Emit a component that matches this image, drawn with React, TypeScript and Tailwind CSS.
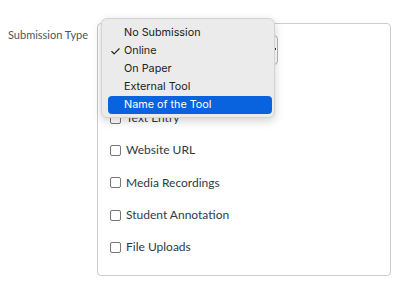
import { Check } from 'lucide-react'

const menuItems = ['No Submission', 'Online', 'On Paper', 'External Tool', 'Name of the Tool']
const options = ['Text Entry', 'Website URL', 'Media Recordings', 'Student Annotation', 'File Uploads']

export default function App() {
  return (
    <div className="relative w-[399px] h-[284px] bg-white font-['Lato','Open_Sans',sans-serif] overflow-hidden">
      <div className="flex pt-[23px] pl-[8px]">
        {/* Field label */}
        <div className="w-[89px] pt-[5px] text-[11px] leading-[14px] text-[#4a555e]">Submission Type</div>

        {/* Fieldset */}
        <div className="w-[294px] h-[253px] border border-[#c7cdd1] rounded-[4px] pl-[9px] pt-[11px]">
          <div className="relative w-[171px] h-[30px] border border-[#b5b5b5] rounded-[4px] bg-white">
            <span className="absolute right-[1px] top-[12px] w-[2px] h-[2px] bg-[#333]" />
          </div>

          <div className="mt-[37px] flex flex-col">
            {options.map((o) => (
              <div key={o} className="h-[32.3px] flex items-center gap-[5px] pl-[3px]">
                <span className="w-[11px] h-[11px] border border-[#767676] rounded-[2px] bg-white" />
                <span className="text-[12px] text-[#2d3b45]">{o}</span>
              </div>
            ))}
          </div>
        </div>
      </div>

      {/* Open select menu */}
      <div className="absolute left-[101px] top-[18px] w-[174px] pt-[5px] pb-[3px] pl-[6px] pr-[2px] bg-[#ebebeb] border border-[#d3d3d3] rounded-[6px] shadow-[0_3px_10px_rgba(0,0,0,0.18)] font-['Inter',sans-serif]">
        {menuItems.map((m, i) => {
          const active = i === 4
          return (
            <div
              key={m}
              className={`h-[18px] flex items-center rounded-[4px] pl-[3px] text-[10.8px] ${active ? 'bg-[#0a63de] text-white' : 'text-[#222]'}`}
            >
              <span className="w-[13px] flex items-center">
                {i === 1 && <Check className="w-[11px] h-[11px] -ml-[1px]" strokeWidth={2.5} />}
              </span>
              {m}
            </div>
          )
        })}
      </div>
    </div>
  )
}
